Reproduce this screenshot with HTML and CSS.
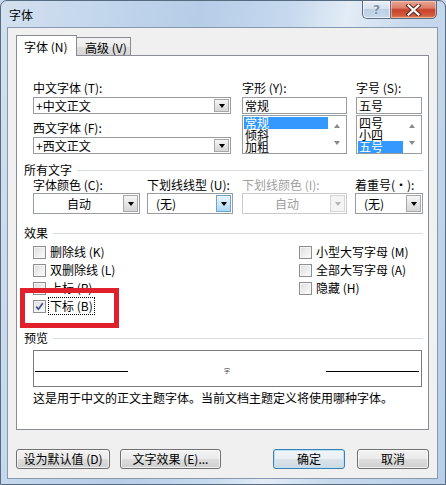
FILE: index.html
```html
<!DOCTYPE html>
<html lang="zh-CN">
<head>
<meta charset="utf-8">
<title>字体</title>
<link rel="stylesheet" href="styles.css">
</head>
<body>
<div class="window">
  <div class="titlebar">
    <span class="title">字体</span>
    <div class="caption">
      <div class="cbtn help"><span class="q">?</span></div>
      <div class="cbtn close">
        <svg width="17" height="12" viewBox="0 0 17 12"><path d="M3.5 1.5 L13.5 10.5 M13.5 1.5 L3.5 10.5" stroke="#5a2a22" stroke-width="4.2" stroke-linecap="square"/><path d="M3.5 1.5 L13.5 10.5 M13.5 1.5 L3.5 10.5" stroke="#ffffff" stroke-width="2.2" stroke-linecap="square"/></svg>
      </div>
    </div>
  </div>
  <div class="client">
    <div class="tabs">
      <div class="tab active">字体 (N)</div>
      <div class="tab">高级 (V)</div>
    </div>
    <div class="panel">
      <div class="fontrow">
        <div class="col w198">
          <div class="lbl">中文字体 (T):</div>
          <div class="combo"><span class="val">+中文正文</span><span class="drop"><i class="tri"></i></span></div>
          <div class="lbl second">西文字体 (F):</div>
          <div class="combo"><span class="val">+西文正文</span><span class="drop"><i class="tri"></i></span></div>
        </div>
        <div class="col w105">
          <div class="lbl">字形 (Y):</div>
          <div class="input">常规</div>
          <div class="list">
            <div class="items"><div class="item sel">常规</div><div class="item">倾斜</div><div class="item">加粗</div></div>
            <div class="sb"><i class="up"></i><i class="dn"></i></div>
          </div>
        </div>
        <div class="col w66">
          <div class="lbl">字号 (S):</div>
          <div class="input">五号</div>
          <div class="list">
            <div class="items"><div class="item">四号</div><div class="item">小四</div><div class="item sel">五号</div></div>
            <div class="sb"><i class="up"></i><i class="dn"></i></div>
          </div>
        </div>
      </div>

      <div class="section"><span>所有文字</span><i class="rule"></i></div>
      <div class="attrrow">
        <div class="col a1">
          <div class="lbl">字体颜色 (C):</div>
          <div class="combo tall"><span class="val center">自动</span><span class="drop"><i class="tri"></i></span></div>
        </div>
        <div class="col a2">
          <div class="lbl">下划线线型 (U):</div>
          <div class="combo tall"><span class="val">(无)</span><span class="drop hot"><i class="tri"></i></span></div>
        </div>
        <div class="col a3">
          <div class="lbl dis">下划线颜色 (I):</div>
          <div class="combo tall disabled"><span class="val center">自动</span><span class="drop"><i class="tri"></i></span></div>
        </div>
        <div class="col a4">
          <div class="lbl">着重号(·):</div>
          <div class="combo tall"><span class="val">(无)</span><span class="drop"><i class="tri"></i></span></div>
        </div>
      </div>

      <div class="section fx"><span>效果</span><i class="rule"></i></div>
      <div class="effects">
        <div class="fxcol left">
          <div class="chk"><i class="box"></i><span class="txt">删除线 (K)</span></div>
          <div class="chk"><i class="box"></i><span class="txt">双删除线 (L)</span></div>
          <div class="chk"><i class="box"></i><span class="txt">上标 (P)</span></div>
          <div class="chk"><i class="box on"><svg width="11" height="11" viewBox="0 0 11 11"><path d="M2.2 5.6 L4.4 8.2 L8.8 2.2" fill="none" stroke="#3f4f86" stroke-width="1.7"/></svg></i><span class="txt focus">下标 (B)</span></div>
        </div>
        <div class="fxcol">
          <div class="chk"><i class="box"></i><span class="txt">小型大写字母 (M)</span></div>
          <div class="chk"><i class="box"></i><span class="txt">全部大写字母 (A)</span></div>
          <div class="chk"><i class="box"></i><span class="txt">隐藏 (H)</span></div>
        </div>
      </div>

      <div class="section pv"><span>预览</span><i class="rule"></i></div>
      <div class="preview">
        <i class="pline"></i>
        <span class="tiny">字</span>
        <i class="pline"></i>
      </div>
      <div class="desc">这是用于中文的正文主题字体。当前文档主题定义将使用哪种字体。</div>
    </div>
    <div class="buttons">
      <div class="btn b1">设为默认值 (D)</div>
      <div class="btn b2">文字效果 (E)...</div>
      <div class="btn b3 default">确定</div>
      <div class="btn b4">取消</div>
    </div>
  </div>
  <div class="annot"></div>
</div>
</body>
</html>
```

FILE: styles.css
```css
* { box-sizing: border-box; }
html, body { margin: 0; padding: 0; }
body {
  width: 446px;
  height: 485px;
  overflow: hidden;
  font-family: "Noto Sans CJK SC", "Liberation Sans", sans-serif;
  font-size: 12px;
  line-height: 14px;
  color: #000;
  background: #c9d8ea;
}
i { display: block; font-style: normal; }

.window {
  position: relative;
  width: 446px;
  height: 485px;
  border: 1px solid #566a80;
  border-radius: 7px 7px 0 0;
  background: linear-gradient(100deg, #d3e0ef 0%, #c2d6ec 20%, #b6cde8 38%, #c6d9ee 55%, #e3ecf6 66%, #c7d9ed 78%, #b9cfe8 100%);
  padding: 0 7px 5px 6px;
  display: flex;
  flex-direction: column;
}

/* title bar */
.titlebar {
  height: 26px;
  display: flex;
  justify-content: space-between;
  align-items: flex-start;
}
.title {
  padding: 6px 0 0 2px;
  line-height: 16px;
  font-size: 12px;
}
.caption {
  display: flex;
  margin-top: -1px;
  margin-right: 1px;
}
.cbtn {
  height: 19px;
  border: 1px solid #5d6e84;
  display: flex;
  align-items: center;
  justify-content: center;
}
.help {
  width: 28px;
  border-right: none;
  border-radius: 0 0 0 5px;
  background: linear-gradient(#e9eff6 0%, #d6e2ef 45%, #bccfe5 50%, #c9d9ec 100%);
  box-shadow: inset 0 0 0 1px rgba(255,255,255,0.6);
}
.help .q {
  font-family: "DejaVu Sans", sans-serif;
  font-weight: bold;
  font-size: 13px;
  color: #7f8fa6;
  text-shadow: 0 0 1px #fff, 0 0 1px #fff;
}
.close {
  width: 47px;
  border-radius: 0 0 5px 0;
  background: linear-gradient(#e8a595 0%, #de7f69 40%, #c8412a 52%, #d25b3e 85%, #e08a5c 100%);
  box-shadow: inset 0 0 0 1px rgba(255,220,210,0.5);
}

/* client */
.client {
  flex: 1;
  background: #f0f0f0;
  border: 1px solid #8699b1;
  padding: 7px 8px 0 8px;
  display: flex;
  flex-direction: column;
}

.tabs {
  height: 20px;
  display: flex;
  align-items: flex-end;
}
.tab {
  border: 1px solid #898c95;
  border-bottom: none;
  padding: 0 0 0 7px;
}
.tab.active {
  width: 61px;
  height: 21px;
  margin-bottom: -1px;
  background: #fff;
  position: relative;
  z-index: 1;
  line-height: 22px;
}
.tab:not(.active) {
  width: 55px;
  height: 18px;
  margin-left: -1px;
  padding-left: 8px;
  line-height: 20px;
  background: linear-gradient(#f3f3f3 0%, #ebebeb 50%, #dddddd 51%, #d6d6d6 100%);
}

.panel {
  height: 375px;
  background: #fff;
  border: 1px solid #898c95;
  padding: 25px 5px 0 7px;
}

.lbl { height: 14px; line-height: 14px; margin-bottom: 2px; white-space: nowrap; }
.lbl.dis { color: #a0a0a0; }
.lbl.second { margin-top: 7px; }

.fontrow { display: flex; margin-left: 9px; }
.w198 { width: 198px; margin-right: 11px; }
.w105 { width: 105px; margin-right: 9px; }
.w66 { width: 66px; }

.combo {
  height: 17px;
  border: 1px solid #9a9ca3;
  background: #fff;
  display: flex;
  align-items: stretch;
  padding: 1px;
}
.combo .val {
  flex: 1;
  padding-left: 1px;
  line-height: 14px;
  white-space: nowrap;
}
.combo .val.center { text-align: center; }
.combo.tall { height: 21px; }
.combo.tall .val { line-height: 18px; padding-left: 7px; }
.combo.tall .val.center { padding-left: 0; }
.drop {
  width: 15px;
  border: 1px solid #a8a8a8;
  background: linear-gradient(#f6f6f6 0%, #e6e6e6 50%, #d6d6d6 100%);
  display: flex;
  align-items: center;
  justify-content: center;
}
.drop.hot {
  border-color: #6da2c9;
  background: linear-gradient(#e8f5fd 0%, #cbe8f9 50%, #aad7f2 100%);
}
.tri {
  width: 0;
  height: 0;
  border-style: solid;
  border-width: 4px 3.5px 0 3.5px;
  border-color: #000 transparent transparent transparent;
}
.combo.disabled { border-color: #c9cacc; }
.combo.disabled .val { color: #9d9d9d; }
.combo.disabled .drop { border-color: #d5d5d5; background: #f4f4f4; }
.combo.disabled .tri { border-top-color: #b5b5b5; }

.input {
  height: 17px;
  border: 1px solid #9a9ca3;
  padding: 1px 0 0 2px;
  line-height: 14px;
  margin-bottom: 1px;
}
.list {
  height: 39px;
  border: 1px solid #9a9ca3;
  display: flex;
  padding: 1px 0 1px 1px;
}
.items { flex: 1; }
.item {
  height: 12px;
  line-height: 12px;
  padding-left: 1px;
  font-size: 12px;
}
.item.sel { background: #3399ff; color: #fff; }
.sb {
  width: 18px;
  display: flex;
  flex-direction: column;
  align-items: center;
  justify-content: space-around;
  background: #fff;
}
.sb .up, .sb .dn { width: 0; height: 0; border-style: solid; }
.sb .up { border-width: 0 3.5px 4px 3.5px; border-color: transparent transparent #8a8a8a transparent; }
.sb .dn { border-width: 4px 3.5px 0 3.5px; border-color: #8a8a8a transparent transparent transparent; }

.section {
  display: flex;
  align-items: center;
  height: 14px;
  margin-top: 9px;
}
.section .rule {
  flex: 1;
  height: 1px;
  background: #d5dfe5;
  margin-left: 5px;
}
.section.fx { margin-top: 12px; }
.section.pv { margin-top: 16px; }

.attrrow { display: flex; margin-left: 9px; margin-top: 1px; }
.attrrow .lbl { margin-bottom: 1px; }
.a1 { width: 107px; margin-right: 7px; }
.a2 { width: 86px; margin-right: 9px; }
.a3 { width: 105px; margin-right: 8px; }
.a4 { width: 68px; }

.effects { display: flex; margin-left: 9px; margin-top: 3px; }
.fxcol.left { width: 266px; }
.chk { height: 18px; display: flex; align-items: center; }
.box {
  width: 13px;
  height: 13px;
  border: 1px solid #8f8f8f;
  background: linear-gradient(135deg, #dcdcdc 0%, #f0f0f0 60%, #fdfdfd 100%);
  box-shadow: inset 0 0 0 1px #f4f4f4;
  display: flex;
  align-items: center;
  justify-content: center;
}
.txt {
  margin-left: 2px;
  padding: 1px 1px;
  border: 1px dotted transparent;
  line-height: 14px;
  white-space: nowrap;
}
.txt.focus { border-color: #000; }

.preview {
  margin: 5px 0 0 9px;
  width: 389px;
  height: 37px;
  border: 1px solid #7a7a7a;
  display: flex;
  justify-content: space-between;
  align-items: flex-start;
  padding: 20px 2px 0 1px;
}
.pline { width: 93px; height: 1px; background: #000; }
.tiny { font-size: 6px; line-height: 6px; margin-top: -3px; color: #444; }
.desc { margin: 4px 0 0 9px; height: 14px; white-space: nowrap; }

.buttons {
  display: flex;
  margin-top: 19px;
}
.btn {
  height: 20px;
  border: 1px solid #707070;
  border-radius: 3px;
  background: linear-gradient(#f2f2f2 0%, #ebebeb 48%, #dddddd 52%, #cfcfcf 100%);
  box-shadow: inset 0 0 0 1px rgba(255,255,255,0.7);
  display: flex;
  align-items: center;
  justify-content: center;
  white-space: nowrap;
}
.b1 { width: 94px; }
.b2 { width: 101px; margin-left: 10px; }
.b3 { width: 72px; margin-left: auto; }
.b4 { width: 72px; margin-left: 12px; }
.btn.default {
  border-color: #3c7fb1;
  box-shadow: inset 0 0 0 1px #b8e2f8;
  background: linear-gradient(#f2f6f9 0%, #e9eff4 48%, #dbe3ea 52%, #d0d9e2 100%);
}

.annot {
  position: absolute;
  left: 19px;
  top: 287px;
  width: 99px;
  height: 40px;
  border: 5px solid #e0202a;
}
```
